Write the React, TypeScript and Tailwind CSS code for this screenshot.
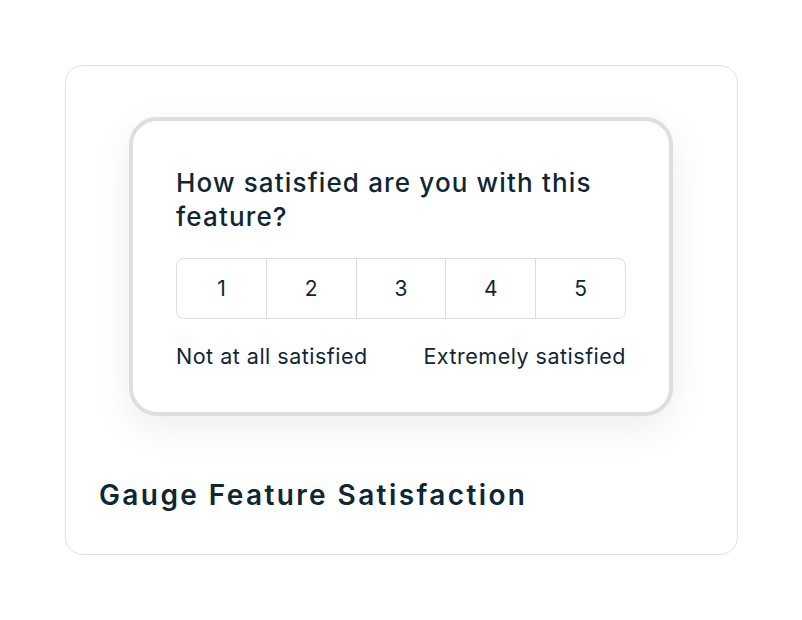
export default function App() {
  const scale = [1, 2, 3, 4, 5];
  return (
    <div className="flex h-[620px] w-[802px] items-start bg-white pl-[65px] pt-[65px] font-['Inter',sans-serif] text-[#0f2634]">
      <div className="flex h-[490px] w-[673px] flex-col rounded-[18px] border border-[#e2e2e2] bg-white">
        <div className="ml-[63px] mt-[51px] w-[544px] rounded-[28px] border-4 border-[#dedede] bg-white px-[43px] pb-[43px] pt-[45px] shadow-[0_12px_40px_rgba(0,0,0,0.07)]">
          <h2 className="text-[26px] font-medium leading-[34px] tracking-[1.15px]">
            How satisfied are you with this feature?
          </h2>
          <div className="mt-[24px] flex h-[61px] overflow-hidden rounded-[8px] border border-[#dedede]">
            {scale.map((n) => (
              <div
                key={n}
                className="flex flex-1 items-center justify-center border-l border-[#dedede] text-[21px] first:border-l-0"
              >
                {n}
              </div>
            ))}
          </div>
          <div className="mt-[24px] flex justify-between text-[21.5px] leading-[26px] tracking-[0.5px]">
            <span>Not at all satisfied</span>
            <span>Extremely satisfied</span>
          </div>
        </div>
        <div className="ml-[33px] mt-[62px] text-[28px] font-semibold leading-[34px] tracking-[2.4px]">
          Gauge Feature Satisfaction
        </div>
      </div>
    </div>
  );
}
